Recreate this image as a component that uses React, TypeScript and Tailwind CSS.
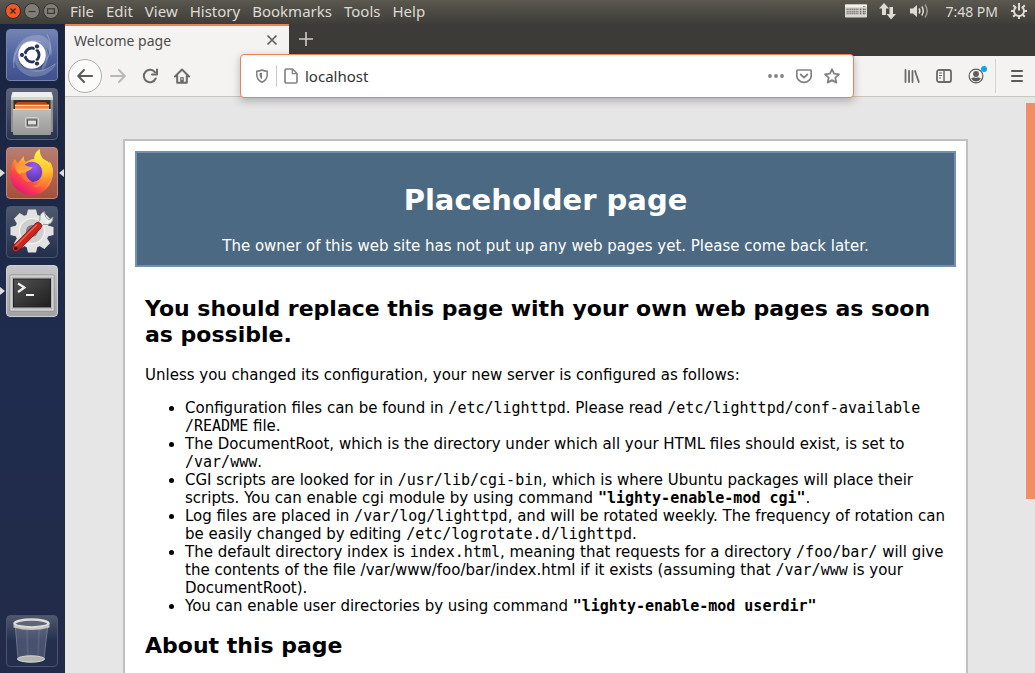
import { useState } from "react";
import type { ReactNode } from "react";

const menus = ["File", "Edit", "View", "History", "Bookmarks", "Tools", "Help"];

function Code({ children }: { children: ReactNode }) {
  return <code className="font-['DejaVu_Sans_Mono',monospace] text-[15px]">{children}</code>;
}

function IconButton({ label, className = "w-8", children }: { label: string; className?: string; children: ReactNode }) {
  return (
    <button aria-label={label} className={`flex h-8 shrink-0 items-center justify-center ${className}`}>
      {children}
    </button>
  );
}

function TopBar() {
  return (
    <header className="flex h-6 shrink-0 items-center bg-linear-to-b from-[#5a584f] to-[#3e3d38] pr-[7px] pb-[2px] pl-[5px] text-[14px] text-[#dfdbd2]">
      <div className="flex shrink-0 gap-[3px]">
        <button aria-label="Close">
          <svg className="size-4" viewBox="0 0 16 16">
            <circle cx="8" cy="8" r="7.5" fill="#ee5a2b" stroke="#3a2a22" />
            <path d="M5.5 5.5l5 5m0-5l-5 5" stroke="#4a2415" strokeWidth="1.4" />
          </svg>
        </button>
        <button aria-label="Minimize">
          <svg className="size-4" viewBox="0 0 16 16">
            <circle cx="8" cy="8" r="7.5" fill="#7f7d76" stroke="#35342f" />
            <path d="M4.5 8.5h7" stroke="#3a3934" strokeWidth="1.2" />
          </svg>
        </button>
        <button aria-label="Restore">
          <svg className="size-4" viewBox="0 0 16 16">
            <circle cx="8" cy="8" r="7.5" fill="#7f7d76" stroke="#35342f" />
            <rect x="4.6" y="5.8" width="6.8" height="4.6" fill="none" stroke="#3a3934" strokeWidth="1.2" />
          </svg>
        </button>
      </div>
      <nav className="ml-[11px] flex gap-3 text-[15px]">
        {menus.map((name) => (
          <button key={name}>{name}</button>
        ))}
      </nav>
      <div className="ml-auto flex items-center">
        <button aria-label="Keyboard">
          <svg className="h-[14px] w-[22px]" viewBox="0 0 22 14">
            <rect x="0" y="0.5" width="22" height="13" rx="1" fill="#d9d8d2" />
            <rect x="0" y="0.5" width="22" height="2.5" fill="#f2f2ee" />
            <path d="M1.5 5.2h12M1.5 7.4h12M1.5 9.6h12" stroke="#77766f" strokeWidth="1.5" strokeDasharray="1.3 .5" />
            <path d="M14.8 5.2h2m1 0h3m-6 2.2h2m1 0h3m-6 2.2h2m1 0h3" stroke="#66655f" strokeWidth="1.5" strokeDasharray="1.2 .4" />
            <path d="M18 2.5h2.5" stroke="#79b765" />
          </svg>
        </button>
        <button aria-label="Network" className="ml-3">
          <svg className="h-[18px] w-[18px]" viewBox="0 0 18 18" fill="#dfdbd2">
            <path d="M5 1l5 5.5H7V13H3V6.500H0z" />
            <path d="M10.500 5h3.500v7H17l-5 5.500L7.500 12h3z" />
          </svg>
        </button>
        <button aria-label="Sound" className="ml-3">
          <svg className="h-[18px] w-5" viewBox="0 0 20 18" fill="none" stroke="#dfdbd2" strokeWidth="1.5">
            <path d="M1 6.500h3l4-3.500v12l-4-3.500H1z" fill="#dfdbd2" stroke="none" />
            <path d="M10 6.500q1.700 2.500 0 5M12.800 4.500q3 4.500 0 9" />
            <path d="M16 2.500q4.500 6.500 0 13" opacity=".55" />
          </svg>
        </button>
        <button className="ml-4">7:48 PM</button>
        <button aria-label="System" className="ml-3">
          <svg className="h-[18px] w-[18px]" viewBox="0 0 18 18" fill="none" stroke="#dfdbd2">
            <path d="M6.300 4.900a5 5 0 1 0 5.400 0" strokeWidth="2" />
            <path d="M9 1v7.500" strokeWidth="2" />
            <path d="M3.200 3.200l2 2M14.800 3.200l-2 2M1 9h3M17 9h-3M3.200 14.800l2-2M14.800 14.800l-2-2M9 17v-3" strokeWidth="2" />
          </svg>
        </button>
      </div>
    </header>
  );
}

function UbuntuIcon() {
  return (
    <svg className="size-[50px]" viewBox="0 0 50 50">
      <defs>
        <linearGradient id="dash" x1="0" y1="0" x2="0" y2="1">
          <stop offset="0" stopColor="#7383b3" />
          <stop offset=".5" stopColor="#5265a0" />
          <stop offset="1" stopColor="#40518d" />
        </linearGradient>
      </defs>
      <rect width="50" height="50" rx="3" fill="url(#dash)" />
      <g fill="#fff" opacity=".2">
        <path d="M6 34C5 18 16 4 32 5c10 1 15 12 12 22C40 10 20 6 6 34z" />
        <path d="M16 43C3 34 6 16 18 10c-8 14 0 29 16 30 8 0 12-3 16-8-4 12-22 20-34 11z" />
        <path d="M8 28C9 14 28 4 38 16c6 8 3 20-4 26 8-22-12-32-26-14z" />
      </g>
      <g fill="none" stroke="#bcc6e2" strokeWidth=".8" opacity=".6">
        <path d="M7 38C5 18 18 7 34 12M40 4c8 16 1 31-14 33M48 34C32 46 16 42 12 27" />
      </g>
      <circle cx="25" cy="26.500" r="14" fill="#25305c" opacity=".35" />
      <circle cx="25" cy="25" r="13.800" fill="#fff" />
      <circle cx="25" cy="25" r="7" fill="none" stroke="#293558" strokeWidth="3" />
      <path d="M25 25H14M25 25l5.500-9.500M25 25l5.500 9.500" stroke="#fff" strokeWidth="1.300" />
      <circle cx="25" cy="25" r="5.300" fill="#fff" />
      <g fill="#293558" stroke="#fff" strokeWidth="1">
        <circle cx="15" cy="25" r="2.600" />
        <circle cx="30" cy="16.400" r="2.600" />
        <circle cx="30" cy="33.600" r="2.600" />
      </g>
    </svg>
  );
}

function FilesIcon() {
  return (
    <svg className="size-[50px]" viewBox="0 0 50 50">
      <defs>
        <linearGradient id="drawer" x1="0" y1="0" x2="0" y2="1">
          <stop offset="0" stopColor="#bdbdbc" />
          <stop offset="1" stopColor="#989897" />
        </linearGradient>
      </defs>
      <path d="M4 8h42v35H4z" fill="#8f8f8e" />
      <path d="M5.500 3h39L46 8v2H4V8z" fill="#eeeeec" />
      <path d="M4 8h42v3H4z" fill="#d3d3d0" />
      <rect x="6.500" y="11" width="37" height="10" fill="#35302f" />
      <path d="M9 14l2-1h27l2 1v7H9z" fill="#b3451f" />
      <path d="M8 15h34v6H8z" fill="#e0682c" />
      <path d="M8 16h34v1.300H8z" fill="#ffe6b7" />
      <path d="M8 18.500h34V21H8z" fill="#f5a553" />
      <rect x="6" y="20" width="38" height="26" rx="1" fill="url(#drawer)" />
      <path d="M6 20.500h38" stroke="#dcdcda" />
      <rect x="18.500" y="28.500" width="13" height="10" rx="1.500" fill="#a3a3a2" stroke="#d2d2d0" />
      <rect x="20.500" y="31" width="9" height="5" fill="#dededc" stroke="#4c4c4c" />
    </svg>
  );
}

function FirefoxIcon() {
  return (
    <svg className="size-[50px]" viewBox="0 0 50 50">
      <defs>
        <linearGradient id="fox" x1=".85" y1=".1" x2=".2" y2=".95">
          <stop offset="0" stopColor="#fff44f" />
          <stop offset=".35" stopColor="#ffa62e" />
          <stop offset=".65" stopColor="#ff4b45" />
          <stop offset="1" stopColor="#e6107f" />
        </linearGradient>
        <linearGradient id="tail" x1=".4" y1="0" x2=".5" y2="1">
          <stop offset="0" stopColor="#fff44f" />
          <stop offset=".6" stopColor="#ffc42c" />
          <stop offset="1" stopColor="#ff6a35" />
        </linearGradient>
        <linearGradient id="muzzle" x1="0" y1="0" x2="1" y2="1">
          <stop offset="0" stopColor="#ff8a34" />
          <stop offset="1" stopColor="#ffbd3a" />
        </linearGradient>
        <radialGradient id="globe" cx=".6" cy=".25" r=".8">
          <stop offset="0" stopColor="#9c5cf6" />
          <stop offset="1" stopColor="#5030a8" />
        </radialGradient>
      </defs>
      <path d="M8 11c1 2 1.500 3 3 4l6-7c-.3 3 0 5 2 6 3-2 6-3 8-3 8-2 17 1 19 12C46 38 36 47 25 47S3 38 3 27c0-7 2-12 5-16z" fill="url(#fox)" />
      <circle cx="25" cy="24" r="10.200" fill="url(#globe)" />
      <path d="M8 16c4-1.500 8-1 11 1.500 2 1.500 4 1.500 6.500 1.500-1 3-4 3.500-6 4.500-1 3-4 4-6.500 2.500-4-2-5.500-6-5-10z" fill="url(#muzzle)" />
      <path d="M14 24c2 1.500 4 1 5.500-.5-1 4 1 8 6 10-6 2-12-3-11.500-9.500z" fill="#ff7139" />
      <path d="M33 1c-5 3-7 8-5 13 4 1 8 5 8.500 10C37 32 32 38 25 38c9 4 20-2 21-12 .5-5-1-10-4-13l1 5C38 12 32 9 33 1z" fill="url(#tail)" />
    </svg>
  );
}

function SettingsIcon() {
  return (
    <svg className="size-[50px]" viewBox="0 0 50 50">
      <g fill="#e2e2e1">
        <circle cx="25" cy="24" r="17" />
        {[0, 45, 90, 135, 180, 225, 270, 315].map((a) => (
          <path key={a} d="M21 2.500h8l1.500 6h-11z" transform={`rotate(${a} 25 24)`} />
        ))}
      </g>
      <circle cx="25" cy="24" r="12.500" fill="#cfcfcf" stroke="#f4f4f4" strokeWidth="1.200" />
      <circle cx="25" cy="24" r="6" fill="#7c8089" />
      <path d="M30 20l7-7" stroke="#8e9498" strokeWidth="6.500" />
      <path d="M37.500 4.500q-5.500 2-4.500 8.500 2 5 7.500 4.500 5.500-1 5.500-7.500l-4 3-3.500-3z" fill="#eceeee" stroke="#8e9498" strokeWidth=".9" />
      <path d="M30 20l7.500-7.500" stroke="#e5e7e8" strokeWidth="5" />
      <path d="M31 19L9 41" stroke="#7f1311" strokeWidth="7.600" strokeLinecap="round" />
      <path d="M31 19L9 41" stroke="#cd2420" strokeWidth="6.400" strokeLinecap="round" />
      <path d="M29.500 18L8.500 39" stroke="#ea6256" strokeWidth="1.600" strokeLinecap="round" />
      <circle cx="8.800" cy="41.200" r="1.700" fill="#3c1114" />
    </svg>
  );
}

function TerminalIcon() {
  return (
    <svg className="size-[50px]" viewBox="0 0 50 50">
      <defs>
        <linearGradient id="screen" x1="0" y1="0" x2="1" y2="1">
          <stop offset="0" stopColor="#535353" />
          <stop offset="1" stopColor="#1d1d1d" />
        </linearGradient>
      </defs>
      <rect x="3" y="9" width="44" height="36" rx="1" fill="#f3f3f2" stroke="#8e8e8e" />
      <rect x="5" y="11" width="40" height="32" fill="#c7c7c6" stroke="#aaa" />
      <rect x="6.500" y="13" width="37" height="28" fill="url(#screen)" stroke="#222" />
      <path d="M11 17.500l6.500 4-6.500 4.500M19 29h8" fill="none" stroke="#f2f2f2" strokeWidth="2.200" />
    </svg>
  );
}

function TrashIcon() {
  return (
    <svg className="size-[50px]" viewBox="0 0 50 50">
      <path d="M8 10h33l-4 34q-12 5-26 0z" fill="#8b96ad" opacity=".35" />
      <path d="M8.500 12L11 44M40.500 12L37 44" stroke="#b9c1cd" opacity=".35" fill="none" />
      <path d="M20 14l1 28M32 14l-1 28" stroke="#b9c1cd" opacity=".12" strokeWidth="2" fill="none" />
      <ellipse cx="24" cy="43" rx="13.500" ry="3.200" fill="#b3b3b0" stroke="#d6d6d2" />
      <ellipse cx="24.500" cy="7.500" rx="17" ry="4" fill="#5d6577" stroke="#dcdbd6" strokeWidth="2.500" />
      <path d="M6.500 9q18 6.500 36 0v2.500q-18 5-36 0z" fill="#c6c5c0" />
    </svg>
  );
}

const launchers = [
  { name: "Search your computer", icon: <UbuntuIcon />, tile: "border-[#7484b5] bg-[#4c5c94]", running: false, focused: false },
  { name: "Files", icon: <FilesIcon />, tile: "border-[#59627a] bg-linear-to-b from-[#5d6579] to-[#27324f]", running: false, focused: false },
  { name: "Firefox", icon: <FirefoxIcon />, tile: "border-[#c08877] bg-linear-to-b from-[#b87e70] to-[#a4503a]", running: true, focused: true },
  { name: "System Settings", icon: <SettingsIcon />, tile: "border-[#4a546e] bg-linear-to-b from-[#50586f] to-[#232e4c]", running: false, focused: false },
  { name: "Terminal", icon: <TerminalIcon />, tile: "border-[#cfcfd1] bg-linear-to-b from-[#c6c6c9] to-[#a1a2a8]", running: true, focused: false },
];

function Launcher() {
  return (
    <aside className="flex w-[65px] shrink-0 flex-col gap-[7px] border-r border-[#242a36] bg-linear-to-b from-[#1a2440] via-[#1f2c4d] to-[#222b49] px-[6px] pt-[5px] pb-[6px]">
      {launchers.map((item) => (
        <button key={item.name} aria-label={item.name} className={`relative size-[52px] rounded border ${item.tile}`}>
          {item.icon}
          {item.running && (
            <svg className="absolute top-[21px] -left-[7px] h-2 w-[5px]" viewBox="0 0 5 8" fill="#dcdcdc">
              <path d="M0 0l5 4-5 4z" />
            </svg>
          )}
          {item.focused && (
            <svg className="absolute top-[21px] -right-[7px] h-2 w-[5px]" viewBox="0 0 5 8" fill="#dcdcdc">
              <path d="M5 0L0 4l5 4z" />
            </svg>
          )}
        </button>
      ))}
      <button aria-label="Trash" className="mt-auto size-[52px] rounded border border-[#4a546e] bg-linear-to-b from-[#50586f] to-[#242f4e] to-50%">
        <TrashIcon />
      </button>
    </aside>
  );
}

function TabBar() {
  return (
    <div className="flex h-8 shrink-0 bg-[#3c3b37]">
      <div className="flex w-56 items-center border-t-2 border-[#ef7f55] bg-[#f4f3f1] pr-[11px] pb-[2px] pl-[9px] text-[14px] text-[#4c4c4c]">
        <span className="grow">Welcome page</span>
        <button aria-label="Close tab">
          <svg className="size-3" viewBox="0 0 12 12" stroke="#5f5f5e" strokeWidth="1.700">
            <path d="M1.500 1.500l9 9m0-9l-9 9" />
          </svg>
        </button>
      </div>
      <button aria-label="New tab" className="flex w-[34px] items-center justify-center pb-[2px]">
        <svg className="size-[14px]" viewBox="0 0 14 14" stroke="#cfccc5" strokeWidth="1.600">
          <path d="M7 0v14M0 7h14" />
        </svg>
      </button>
    </div>
  );
}

function UrlBar() {
  const [url, setUrl] = useState("localhost");

  return (
    <div className="z-10 mx-[42px] flex h-11 min-w-0 grow items-center rounded border border-[#ef7f55] bg-white px-[7px] shadow-[0_3px_8px_rgba(0,0,0,0.25)]">
      <IconButton label="Tracking protection" className="w-7">
        <svg className="size-[14px]" viewBox="0 0 14 14" fill="none" stroke="#7e7e7d">
          <path d="M7 1c2 1 3.500 1.200 5.200 1.200v3.500c0 3.500-2 6-5.200 7.500-3.200-1.500-5.200-4-5.200-7.500V2.200C3.500 2.200 5 2 7 1z" strokeWidth="1.500" />
          <path d="M7 3.600v6.600c-1.700-1-2.500-2.500-2.500-4.600V4.300z" fill="#7e7e7d" stroke="none" />
        </svg>
      </IconButton>
      <div className="h-[22px] w-px bg-[#c9c9c8]" />
      <IconButton label="Site information" className="w-7">
        <svg className="size-4" viewBox="0 0 16 16" fill="none" stroke="#858584" strokeWidth="1.700" strokeLinejoin="round">
          <path d="M3.500 1H9.500L14 5.500v8.200q0 1.300-1.300 1.300H3.300Q2 15 2 13.700V2.300Q2 1 3.500 1z" />
          <path d="M9.300 1.500v4.200h4.300" strokeWidth="1.300" />
        </svg>
      </IconButton>
      <input
        aria-label="Address"
        value={url}
        onChange={(e) => setUrl(e.target.value)}
        className="min-w-0 grow bg-transparent text-[15px] text-[#333] outline-none"
      />
      <IconButton label="Page actions" className="w-7">
        <svg className="size-4" viewBox="0 0 16 16" fill="#838382">
          <circle cx="2" cy="8" r="1.900" />
          <circle cx="8" cy="8" r="1.900" />
          <circle cx="14" cy="8" r="1.900" />
        </svg>
      </IconButton>
      <IconButton label="Save to Pocket" className="w-7">
        <svg className="size-4" viewBox="0 0 16 16" fill="none" stroke="#838382" strokeWidth="1.700" strokeLinecap="round" strokeLinejoin="round">
          <path d="M2 2h12q1.200 0 1.200 1.200V7.500a7.200 6.800 0 0 1-14.400 0V3.200Q.8 2 2 2z" />
          <path d="M4.700 6.500L8 9.600l3.300-3.100" strokeWidth="1.900" />
        </svg>
      </IconButton>
      <IconButton label="Bookmark this page" className="w-7">
        <svg className="size-4" viewBox="0 0 16 16" fill="none" stroke="#838382" strokeWidth="1.800" strokeLinejoin="round">
          <path d="M8 1.200l2 4.500 5 .6-3.700 3.300 1 5L8 12.100l-4.300 2.500 1-5L1 6.300l5-.6z" />
        </svg>
      </IconButton>
    </div>
  );
}

function Toolbar() {
  return (
    <div className="flex h-[41px] shrink-0 items-center border-b border-[#cbc6c0] bg-[#f4f3f1] pr-[2px] pl-[3px]">
      <button aria-label="Back" className="flex size-[34px] shrink-0 items-center justify-center rounded-full border border-[#aeaead] bg-[#fbfbfa]">
        <svg className="size-4" viewBox="0 0 16 16" fill="none" stroke="#5b5b59" strokeWidth="2" strokeLinecap="round" strokeLinejoin="round">
          <path d="M15 8H1.500M7 2L1.200 8 7 14" />
        </svg>
      </button>
      <IconButton label="Forward">
        <svg className="size-4" viewBox="0 0 16 16" fill="none" stroke="#b9b8b6" strokeWidth="2" strokeLinecap="round" strokeLinejoin="round">
          <path d="M1 8h13.500M9 2l5.800 6L9 14" />
        </svg>
      </IconButton>
      <IconButton label="Reload">
        <svg className="size-4" viewBox="0 0 16 16" fill="none" stroke="#6a6a68" strokeWidth="2" strokeLinecap="round">
          <path d="M13.700 10.500A6.200 6.200 0 1 1 13 4.300" />
          <path d="M15 1.500V6.500H10" strokeLinejoin="round" />
        </svg>
      </IconButton>
      <IconButton label="Home">
        <svg className="size-4" viewBox="0 0 16 16" fill="none" stroke="#6a6a68" strokeWidth="2" strokeLinecap="round" strokeLinejoin="round">
          <path d="M1 8.500L8 1.500l7 7M3.200 8v6.800h9.600V8" />
          <path d="M6.200 14.500V9.200h3.600v5.300z" fill="#6a6a68" stroke="none" />
          <path d="M8 10.500v1" stroke="#f4f3f1" strokeWidth="1" />
        </svg>
      </IconButton>
      <UrlBar />
      <IconButton label="Library">
        <svg className="size-4" viewBox="0 0 16 16" stroke="#6a6a68" strokeWidth="1.800" strokeLinecap="round">
          <path d="M1.500 2v12M5 3v11M8.500 3v11M11 3l3.800 11" />
        </svg>
      </IconButton>
      <IconButton label="Sidebars">
        <svg className="size-4" viewBox="0 0 16 16" fill="none" stroke="#6a6a68">
          <rect x="1" y="2" width="14" height="12" rx="2" strokeWidth="1.800" />
          <path d="M8 2v12" strokeWidth="1.500" />
          <path d="M3 5h3M3 7.500h3M3 10h2" strokeWidth="1" />
        </svg>
      </IconButton>
      <button aria-label="Account" className="relative flex size-8 shrink-0 items-center justify-center">
        <svg className="size-4" viewBox="0 0 16 16" fill="#5b5b59">
          <circle cx="8" cy="8" r="6.900" fill="none" stroke="#5b5b59" strokeWidth="1.200" />
          <circle cx="8" cy="6" r="2.900" />
          <path d="M3.200 10.200q1.500-.7 2.800-1 2 1.200 4 0 1.300.3 2.800 1-1.500 3.200-4.800 3.200t-4.800-3.200z" />
        </svg>
        <span className="absolute top-[6px] right-[5px] size-[6px] rounded-full bg-[#00a8f5]" />
      </button>
      <div className="mr-[5px] ml-[3px] h-[34px] w-px bg-[#d3d1ce]" />
      <IconButton label="Open menu">
        <svg className="size-4" viewBox="0 0 16 16" stroke="#5b5b59" strokeWidth="2" strokeLinecap="round">
          <path d="M3 3h10M3 8h10M3 13h10" />
        </svg>
      </IconButton>
    </div>
  );
}

function PlaceholderPage() {
  return (
    <main className="mx-[58px] mt-[42px] flex min-w-0 grow flex-col border-2 border-b-0 border-[#c0c0c0] bg-white p-[10px] font-['DejaVu_Sans',sans-serif] text-[15px] leading-[18px] text-black">
      <div className="border-2 border-[#7590ae] bg-[#4c6983] p-[10px] text-center text-white">
        <h1 className="my-5 text-[29px] leading-[34px] font-bold">Placeholder page</h1>
        <p>The owner of this web site has not put up any web pages yet. Please come back later.</p>
      </div>
      <div className="px-[10px] pt-[11px]">
        <h2 className="my-[18px] text-[22px] leading-[26px] font-bold">
          You should replace this page with your own web pages as soon as possible.
        </h2>
        <p>Unless you changed its configuration, your new server is configured as follows:</p>
        <ul className="my-[15px] list-disc pl-10">
          <li>
            Configuration files can be found in <Code>/etc/lighttpd</Code>. Please read{" "}
            <Code>
              /etc/lighttpd/conf-available
              <wbr />
              /README
            </Code>{" "}
            file.
          </li>
          <li>
            The DocumentRoot, which is the directory under which all your HTML files should exist, is set to{" "}
            <Code>/var/www</Code>.
          </li>
          <li>
            CGI scripts are looked for in <Code>/usr/lib/cgi-bin</Code>, which is where Ubuntu packages will place
            their scripts. You can enable cgi module by using command{" "}
            <b>
              <Code>"lighty-enable-mod cgi"</Code>
            </b>
            .
          </li>
          <li>
            Log files are placed in <Code>/var/log/lighttpd</Code>, and will be rotated weekly. The frequency of
            rotation can be easily changed by editing <Code>/etc/logrotate.d/lighttpd</Code>.
          </li>
          <li>
            The default directory index is <Code>index.html</Code>, meaning that requests for a directory{" "}
            <Code>/foo/bar/</Code> will give the contents of the file /var/www/foo/bar/index.html if it exists
            (assuming that <Code>/var/www</Code> is your DocumentRoot).
          </li>
          <li>
            You can enable user directories by using command{" "}
            <b>
              <Code>"lighty-enable-mod userdir"</Code>
            </b>
          </li>
        </ul>
        <h2 className="my-[18px] text-[22px] leading-[26px] font-bold">About this page</h2>
      </div>
    </main>
  );
}

export default function App() {
  return (
    <div className="flex h-screen flex-col overflow-hidden font-['Noto_Sans','Open_Sans',sans-serif]">
      <TopBar />
      <div className="flex min-h-0 grow">
        <Launcher />
        <div className="flex min-w-0 grow flex-col">
          <TabBar />
          <Toolbar />
          <div className="flex min-h-0 grow overflow-hidden bg-[#e6e6e6]">
            <PlaceholderPage />
            <div className="w-[9px] shrink-0 pt-[6px]">
              <div className="h-25/36 bg-[#f08e66]" />
            </div>
          </div>
        </div>
      </div>
    </div>
  );
}
